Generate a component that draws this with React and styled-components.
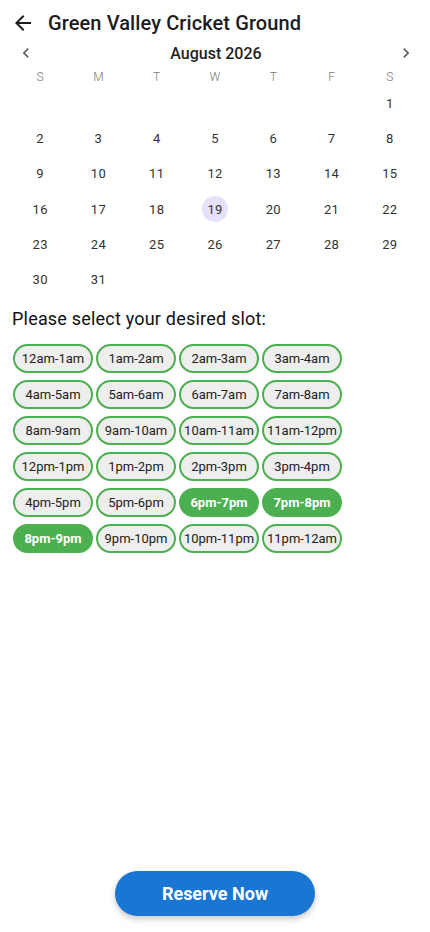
import styled, { createGlobalStyle } from "styled-components";
import { useState } from "react";

const GlobalStyle = createGlobalStyle`
  body {
    margin: 0;
    background: #ffffff;
    font-family: Roboto, "Noto Sans", sans-serif;
    color: #1c1b1f;
  }
  * {
    box-sizing: border-box;
  }
`;

const Page = styled.div`
  width: 430px;
  height: 932px;
  display: flex;
  flex-direction: column;
  background: #ffffff;
`;

const Header = styled.header`
  height: 42px;
  display: flex;
  align-items: center;
  gap: 13px;
  padding: 3px 0 0 11px;
`;

const IconButton = styled.button`
  display: inline-flex;
  align-items: center;
  justify-content: center;
  padding: 0;
  border: none;
  background: none;
  cursor: pointer;
  color: ${({ $color }) => $color || "#1c1b1f"};

  & > svg {
    width: ${({ $size }) => $size || 24}px;
    height: ${({ $size }) => $size || 24}px;
    fill: currentColor;
  }
`;

const Title = styled.h1`
  margin: 0;
  font-size: 20px;
  font-weight: 500;
  letter-spacing: 0.1px;
`;

const Calendar = styled.section`
  padding: 0 11px;
`;

const MonthBar = styled.div`
  height: 22px;
  display: flex;
  align-items: center;
  justify-content: space-between;
  padding: 0 3px 0 5px;
`;

const MonthLabel = styled.span`
  font-size: 16px;
  font-weight: 500;
  color: #1f1f1f;
`;

const Grid = styled.div`
  display: grid;
  grid-template-columns: repeat(7, 1fr);
`;

const WeekDay = styled.div`
  height: 22px;
  display: flex;
  align-items: center;
  justify-content: center;
  padding-top: 3px;
  font-size: 12px;
  font-weight: 300;
  color: #7a7a7a;
`;

const DayCell = styled.div`
  height: 35.2px;
  display: flex;
  align-items: center;
  justify-content: center;
`;

const Day = styled.span`
  width: 26px;
  height: 26px;
  border-radius: 50%;
  display: flex;
  align-items: center;
  justify-content: center;
  font-size: 13px;
  color: #333333;
  letter-spacing: 0.3px;
  background: ${({ $today }) => ($today ? "#e7e0fb" : "transparent")};
`;

const SlotTitle = styled.h2`
  margin: 10px 0 0 12px;
  font-size: 18px;
  font-weight: 400;
  letter-spacing: 0.2px;
  line-height: 24px;
  color: #111111;
`;

const Slots = styled.div`
  display: grid;
  grid-template-columns: repeat(4, 80px);
  column-gap: 3px;
  row-gap: 7px;
  padding: 13px 0 0 13px;
`;

const Slot = styled.button`
  width: 80px;
  height: 29px;
  padding: 0;
  border-radius: 15px;
  border: 2px solid #4caf50;
  background: ${({ $active }) => ($active ? "#4caf50" : "#eeeeee")};
  color: ${({ $active }) => ($active ? "#ffffff" : "#212121")};
  font-family: Roboto, sans-serif;
  font-size: 13px;
  font-weight: ${({ $active }) => ($active ? 700 : 400)};
  white-space: nowrap;
  display: flex;
  align-items: center;
  justify-content: center;
  overflow: visible;
  cursor: pointer;
`;

const Spacer = styled.div`
  flex: 1;
`;

const Footer = styled.div`
  display: flex;
  justify-content: center;
  padding-bottom: 16px;
`;

const ReserveButton = styled.button`
  width: 200px;
  height: 45px;
  border: none;
  border-radius: 23px;
  background: #1976d2;
  color: #ffffff;
  font-family: Roboto, sans-serif;
  font-size: 18px;
  font-weight: 700;
  box-shadow: 0 3px 6px rgba(0, 0, 0, 0.22);
  cursor: pointer;
`;

const weekDays = ["S", "M", "T", "W", "T", "F", "S"];

const hourLabel = (h) => {
  const hr = h % 12 === 0 ? 12 : h % 12;
  return `${hr}${h % 24 < 12 ? "am" : "pm"}`;
};

const slots = Array.from({ length: 24 }, (_, h) => `${hourLabel(h)}-${hourLabel(h + 1)}`);

export default function App() {
  const [selected, setSelected] = useState([18, 19, 20]);
  // August 2026 starts on a Saturday
  const cells = [...Array(6).fill(null), ...Array.from({ length: 31 }, (_, i) => i + 1)];

  const toggle = (i) => {
    setSelected((prev) => (prev.includes(i) ? prev.filter((x) => x !== i) : [...prev, i]));
  };

  return (
    <Page>
      <GlobalStyle />
      <Header>
        <IconButton>
          <svg viewBox="0 0 24 24">
            <path d="M20 11H7.83l5.59-5.59L12 4l-8 8 8 8 1.41-1.41L7.83 13H20v-2z" />
          </svg>
        </IconButton>
        <Title>Green Valley Cricket Ground</Title>
      </Header>
      <Calendar>
        <MonthBar>
          <IconButton $size={20} $color="#616161">
            <svg viewBox="0 0 24 24">
              <path d="M15.41 7.41L14 6l-6 6 6 6 1.41-1.41L10.83 12z" />
            </svg>
          </IconButton>
          <MonthLabel>August 2026</MonthLabel>
          <IconButton $size={20} $color="#616161">
            <svg viewBox="0 0 24 24">
              <path d="M10 6L8.59 7.41 13.17 12l-4.58 4.59L10 18l6-6z" />
            </svg>
          </IconButton>
        </MonthBar>
        <Grid>
          {weekDays.map((d, i) => (
            <WeekDay key={i}>{d}</WeekDay>
          ))}
          {cells.map((d, i) => (
            <DayCell key={i}>{d && <Day $today={d === 19}>{d}</Day>}</DayCell>
          ))}
        </Grid>
      </Calendar>
      <SlotTitle>Please select your desired slot:</SlotTitle>
      <Slots>
        {slots.map((s, i) => (
          <Slot key={s} $active={selected.includes(i)} onClick={() => toggle(i)}>
            {s}
          </Slot>
        ))}
      </Slots>
      <Spacer />
      <Footer>
        <ReserveButton>Reserve Now</ReserveButton>
      </Footer>
    </Page>
  );
}
